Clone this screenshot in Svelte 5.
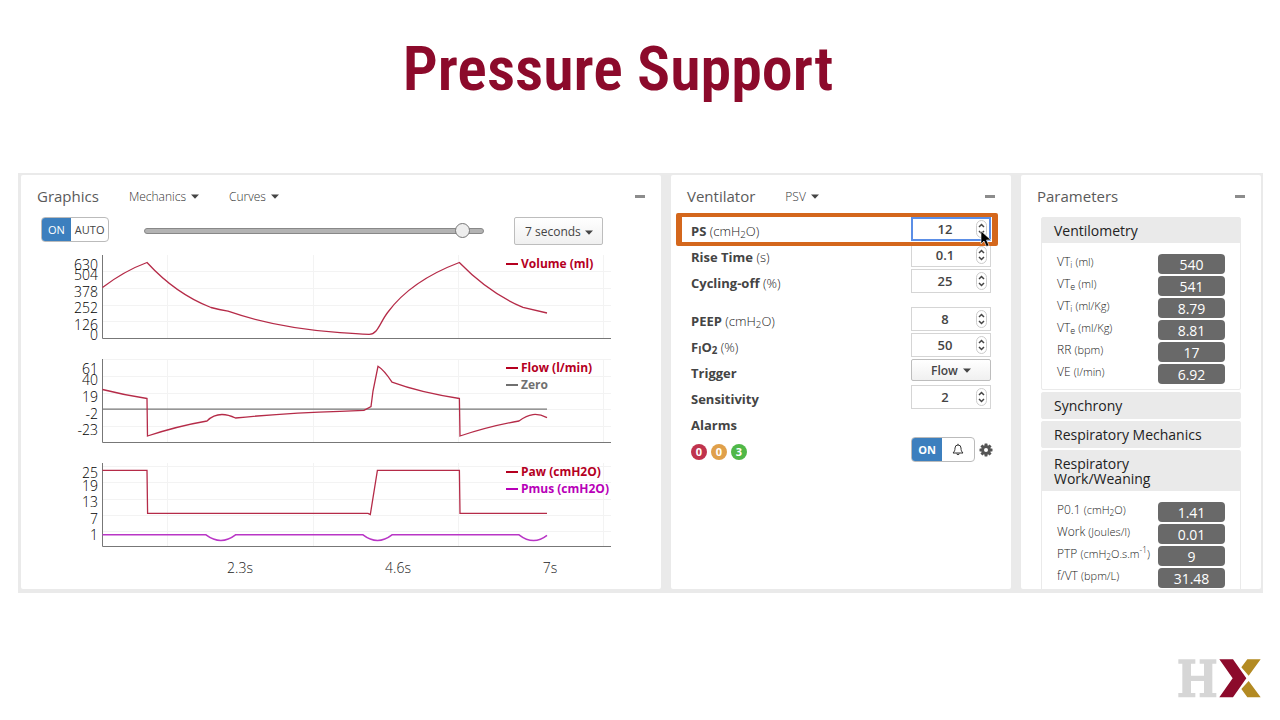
<script>
  const settings = [
    { id: 'ps', name: 'PS', unit: '(cmH<sub>2</sub>O)', value: 12, step: 1, active: true },
    { id: 'rise', name: 'Rise Time', unit: '(s)', value: 0.1, step: 0.1 },
    { id: 'cycling', name: 'Cycling-off', unit: '(%)', value: 25, step: 1 },
    { id: 'peep', name: 'PEEP', unit: '(cmH<sub>2</sub>O)', value: 8, step: 1, spaced: true },
    { id: 'fio2', name: 'F<sub>I</sub>O<sub>2</sub>', unit: '(%)', value: 50, step: 1 },
    { id: 'trigger', name: 'Trigger', options: ['Flow', 'Pressure'] },
    { id: 'sensitivity', name: 'Sensitivity', unit: '', value: 2, step: 1 },
  ];
  let values = $state(Object.fromEntries(settings.map((s) => [s.id, s.value])));
  let span = $state(96);

  function bump(s, dir) {
    values[s.id] = Math.round((Number(values[s.id]) + dir * s.step) * 10) / 10;
  }

  const groups = [
    {
      title: 'Ventilometry',
      rows: [
        ['VT<sub>i</sub>', '(ml)', '540'],
        ['VT<sub>e</sub>', '(ml)', '541'],
        ['VT<sub>i</sub>', '(ml/Kg)', '8.79'],
        ['VT<sub>e</sub>', '(ml/Kg)', '8.81'],
        ['RR', '(bpm)', '17'],
        ['VE', '(l/min)', '6.92'],
      ],
    },
    { title: 'Synchrony', rows: [] },
    { title: 'Respiratory Mechanics', rows: [] },
    {
      title: 'Respiratory Work/Weaning',
      rows: [
        ['P0.1', '(cmH<sub>2</sub>O)', '1.41'],
        ['Work', '(Joules/l)', '0.01'],
        ['PTP', '(cmH<sub>2</sub>O.s.m<sup>-1</sup>)', '9'],
        ['f/VT', '(bpm/L)', '31.48'],
      ],
    },
  ];

  const red = '#b5001f';
  const plots = [
    {
      top: 255,
      bottom: 339,
      grid: [271, 288, 305, 321],
      ticks: [['630', 270], ['504', 280], ['378', 297], ['252', 313], ['126', 330], ['0', 340]],
      legend: [['Volume (ml)', red, 268]],
    },
    {
      top: 359,
      bottom: 443,
      grid: [359, 376, 393, 409, 426],
      ticks: [['61', 374], ['40', 385], ['19', 402], ['-2', 419], ['-23', 435]],
      legend: [['Flow (l/min)', red, 372], ['Zero', '#707070', 389]],
    },
    {
      top: 463,
      bottom: 547,
      grid: [466, 482, 499, 515, 531],
      ticks: [['25', 478], ['19', 491], ['13', 507], ['7', 524], ['1', 540]],
      legend: [['Paw (cmH2O)', red, 476], ['Pmus (cmH2O)', '#b800b8', 493]],
    },
  ];
  const columns = [167, 313, 458, 603];
</script>

{#snippet caret()}
  <svg class="caret" viewBox="0 0 8 5" aria-hidden="true"><path d="M0 0.4h8L4 4.8z" /></svg>
{/snippet}

<main>
  <h1>Pressure Support</h1>

  <div class="board">
    <section class="panel graphics">
      <header>
        <h2>Graphics</h2>
        <button class="menu first">Mechanics {@render caret()}</button>
        <button class="menu second">Curves {@render caret()}</button>
        <button class="collapse" aria-label="Collapse graphics"></button>
      </header>
      <div class="controls">
        <div class="toggle" role="group" aria-label="Scaling">
          <button class="on" aria-pressed="true">ON</button>
          <button aria-pressed="false">AUTO</button>
        </div>
        <input class="range" type="range" min="0" max="100" bind:value={span} aria-label="Time position" />
        <div class="select wide">
          <select aria-label="Time window">
            <option>7 seconds</option>
            <option>14 seconds</option>
          </select>
          {@render caret()}
        </div>
      </div>
      <svg class="chart" viewBox="37 250 608 332" role="img" aria-label="Volume, flow and pressure curves">
        {#each plots as p}
          {#each p.grid as y}<path class="grid" d="M103 {y}.5H611" />{/each}
          {#each columns as x}<path class="grid" d="M{x}.5 {p.top}V{p.bottom}" />{/each}
          <path class="axis" d="M102.5 {p.top}V{p.bottom - 0.5}H611" />
          {#each p.ticks as [t, y]}<text class="tick" x="98" {y}>{t}</text>{/each}
        {/each}

        <path class="curve" d="M102.5 287.5Q124 271 147 262.5Q176 294 211 307.5Q219 309.5 228 311.2C262 323 296 329.5 340 332.6Q357 333.8 369 334.3C378 334.5 380 322 388 312C405 289 429 274 459.3 262.5Q489 293 523 307.4Q534 310 547 313" />
        <path class="zero" d="M103 409.2H547" />
        <path class="curve" d="M102.5 389.5Q124 395 147 398.5L147.5 436Q178 426 207 421C215 413 225 413 235.5 418Q290 412.5 340 411.3L364 410.3L371 406.5L373 391L378 366.3Q384 370 392 382.2Q420 392.5 459.4 398.5L460 436Q490 426 519 421C529 413.5 537 412.5 547 417.7" />
        <path class="curve" d="M102.5 470.4H147L147.6 513.4H368L370.3 514.6L377.4 470.4H459.4L460 513.4H547" />
        <path class="pmus" d="M102.5 534.8H206Q221 546 235.5 534.8H363Q377.500 546 392 534.8H519Q533.500 546 547 535.4" />

        {#each plots as p}
          {#each p.legend as [name, color, y]}
            <path d="M506 {y - 4}h12" stroke={color} stroke-width="2" />
            <text class="legend" x="521" {y} fill={color}>{name}</text>
          {/each}
        {/each}
        <text class="time" x="240" y="573">2.3s</text>
        <text class="time" x="398" y="573">4.6s</text>
        <text class="time" x="550" y="573">7s</text>
      </svg>
    </section>

    <section class="panel ventilator">
      <header>
        <h2>Ventilator</h2>
        <button class="menu first">PSV {@render caret()}</button>
        <button class="collapse" aria-label="Collapse ventilator"></button>
      </header>
      {#each settings as s}
        <div class="setting" class:active={s.active} class:spaced={s.spaced}>
          <label for={s.id}><b>{@html s.name}</b> {#if s.unit}<span>{@html s.unit}</span>{/if}</label>
          {#if s.options}
            <div class="select narrow">
              <select id={s.id}>
                {#each s.options as o}<option>{o}</option>{/each}
              </select>
              {@render caret()}
            </div>
          {:else}
            <div class="number">
              <input id={s.id} type="number" step={s.step} bind:value={values[s.id]} />
              <div class="stepper">
                <button aria-label="Increase" onclick={() => bump(s, 1)}>
                  <svg viewBox="0 0 7 5" aria-hidden="true"><path d="M1 4l2.500-2.500L6 4" /></svg>
                </button>
                <button aria-label="Decrease" onclick={() => bump(s, -1)}>
                  <svg viewBox="0 0 7 5" aria-hidden="true"><path d="M1 1l2.500 2.500L6 1" /></svg>
                </button>
              </div>
            </div>
          {/if}
          {#if s.active}
            <svg class="pointer" viewBox="0 0 12 18" aria-hidden="true">
              <path d="M1 1v13l3-3 2.500 5.500 2.500-1-2.500-5.500H11z" />
            </svg>
          {/if}
        </div>
      {/each}
      <h3>Alarms</h3>
      <div class="alarms">
        <span class="badge high">0</span>
        <span class="badge medium">0</span>
        <span class="badge low">3</span>
        <div class="toggle bold" role="group" aria-label="Alarms">
          <button class="on" aria-pressed="true">ON</button>
          <button aria-pressed="false" aria-label="Silence">
            <svg class="bell" viewBox="0 0 12 13" aria-hidden="true">
              <path d="M1 10c1.500-1.500 2-2.700 2-5a3 3 0 0 1 6 0c0 2.300.5 3.500 2 5z" />
              <path d="M6 2V.8M4.800 10.500a1.200 1.200 0 0 0 2.400 0" />
            </svg>
          </button>
        </div>
        <button class="gear" aria-label="Alarm settings">
          <svg viewBox="-7 -7 14 14" aria-hidden="true">
            {#each [0, 45, 90, 135] as a}
              <rect x="-1.500" y="-6.500" width="3" height="13" rx="0.4" transform="rotate({a})" />
            {/each}
            <circle r="4.800" />
            <circle class="hole" r="2" />
          </svg>
        </button>
      </div>
    </section>

    <section class="panel parameters">
      <header>
        <h2>Parameters</h2>
        <button class="collapse" aria-label="Collapse parameters"></button>
      </header>
      <div class="groups">
        {#each groups as g}
          <article>
            <h3>{g.title}</h3>
            {#if g.rows.length}
              <table>
                <tbody>
                  {#each g.rows as [name, unit, value]}
                    <tr>
                      <th scope="row">{@html name} <small>{@html unit}</small></th>
                      <td><span>{value}</span></td>
                    </tr>
                  {/each}
                </tbody>
              </table>
            {/if}
          </article>
        {/each}
      </div>
    </section>
  </div>

  <footer>
    <svg class="logo" viewBox="39 41 249 117" role="img" aria-label="HX">
      <path fill="#d6d6d6" d="M40 42h51v13H78v36h39V55h-13V42h50v13h-12v88h12v13h-50v-13h13v-36H78v36h13v13H40v-13h12V55H40z" />
      <path fill="#8c0a2b" d="M163 42h41l40 57-40 57h-41l40-57z" />
      <path fill="#b38a22" d="M247 42h40l-36 49-22-25zM251 107l36 49h-40l-18-25z" />
    </svg>
  </footer>
</main>

<style>
  :global(body) {
    margin: 0;
    background: #fff;
  }
  main {
    font-family: 'Open Sans', 'Noto Sans', sans-serif;
    color: #444;
  }
  main :global(sub),
  main :global(sup) {
    font-size: 75%;
    line-height: 0;
  }
  main :global(sub) {
    vertical-align: -2px;
  }
  h1,
  h2,
  h3 {
    margin: 0;
    font-weight: 400;
  }
  h1 {
    height: 173px;
    box-sizing: border-box;
    padding: 31px 44px 0 0;
    text-align: center;
    font: 600 62px/76px 'Avenir Next Condensed', 'Roboto Condensed', 'Liberation Sans Narrow', 'DejaVu Sans Condensed', sans-serif;
    color: #8c0a2b;
  }
  button,
  select,
  input {
    font: inherit;
    color: inherit;
  }
  button {
    padding: 0;
    border: 0;
    background: none;
  }

  .board {
    display: grid;
    grid-template-columns: 640fr 340fr 240fr;
    gap: 10px;
    margin: 0 17px 0 18px;
    padding: 2px 2px 4px 3px;
    background: #eaeaea;
  }
  .panel {
    min-width: 0;
    box-sizing: border-box;
    padding: 0 20px 0 16px;
    background: #fff;
    border-radius: 2px;
  }
  .panel > header {
    display: flex;
    align-items: center;
    height: 42px;
    margin-right: -4px;
  }
  .panel.graphics > header {
    margin-right: 0;
  }
  h2 {
    font-size: 15px;
    color: #5a5a5a;
  }
  .menu {
    display: flex;
    align-items: center;
    gap: 5px;
    margin-left: 30px;
    font-size: 12px;
    font-weight: 300;
    color: #333;
  }
  .caret {
    width: 8px;
    height: 5px;
    fill: #444;
  }
  .collapse {
    width: 10px;
    height: 3px;
    margin-left: auto;
    background: #8c8c8c;
  }

  .graphics {
    padding-right: 16px;
  }
  .controls {
    display: flex;
    align-items: flex-start;
    height: 33px;
    padding: 0 42px 0 4px;
  }
  .toggle {
    display: flex;
    box-sizing: border-box;
    height: 25px;
    border: 1px solid #bbb;
    border-radius: 4px;
    overflow: hidden;
    font-size: 11px;
  }
  .toggle button {
    padding: 0 4px;
  }
  .toggle .on {
    padding: 0 6px;
    background: #3c7fbe;
    color: #fff;
  }
  .range {
    appearance: none;
    flex: 1;
    min-width: 0;
    height: 28px;
    margin: 0 30px 0 35px;
    background: none;
  }
  .range::-webkit-slider-runnable-track {
    height: 6px;
    box-sizing: border-box;
    border: 1px solid #888;
    border-radius: 3px;
    background: #b3b3b3;
  }
  .range::-webkit-slider-thumb {
    appearance: none;
    box-sizing: border-box;
    width: 15px;
    height: 15px;
    margin-top: -6px;
    border: 1px solid #777;
    border-radius: 50%;
    background: #eee;
  }
  .select {
    position: relative;
  }
  .select select {
    appearance: none;
    box-sizing: border-box;
    width: 100%;
    height: 100%;
    border: 1px solid #bdbdbd;
    border-radius: 2px;
    background: linear-gradient(#fff, #f0f0f0);
  }
  .select .caret {
    position: absolute;
    pointer-events: none;
  }
  .wide {
    width: 89px;
    height: 28px;
    font-size: 12px;
  }
  .wide select {
    padding: 0 10px;
  }
  .wide .caret {
    right: 10px;
    top: 13px;
  }
  .chart {
    display: block;
    width: 100%;
    height: auto;
    padding-bottom: 7px;
    fill: none;
  }
  .grid {
    stroke: #f3f3f3;
  }
  .axis {
    stroke: #777;
  }
  .curve {
    stroke: #b52b48;
    stroke-width: 1.3;
  }
  .zero {
    stroke: #777;
    stroke-width: 1.3;
  }
  .pmus {
    stroke: #b936c6;
    stroke-width: 1.500;
  }
  .tick {
    font-size: 14px;
    font-weight: 300;
    text-anchor: end;
    fill: #000;
  }
  .time {
    font-size: 14px;
    font-weight: 300;
    text-anchor: middle;
    fill: #222;
  }
  .legend {
    font-size: 12px;
    font-weight: 700;
  }

  .setting {
    position: relative;
    display: flex;
    justify-content: space-between;
    height: 26px;
    padding-left: 4px;
  }
  .setting.spaced {
    margin-top: 12px;
  }
  .setting label,
  .ventilator h3 {
    font-size: 13px;
    line-height: 28px;
  }
  .setting b,
  .ventilator h3 {
    font-weight: 700;
    color: #444;
  }
  .setting span {
    font-weight: 300;
    color: #222;
  }
  .ventilator h3 {
    padding-left: 4px;
    height: 26px;
  }
  .number {
    position: relative;
    width: 80px;
    height: 24px;
  }
  .number input {
    appearance: textfield;
    box-sizing: border-box;
    width: 100%;
    height: 100%;
    margin: 0;
    padding: 0 12px 0 0;
    border: 1px solid #d5d5d5;
    background: #fff;
    text-align: center;
    font-size: 13px;
    font-weight: 600;
    outline: none;
  }
  .number input::-webkit-inner-spin-button {
    display: none;
  }
  .stepper {
    position: absolute;
    right: 4px;
    top: 3px;
    display: flex;
    flex-direction: column;
    justify-content: space-evenly;
    align-items: center;
    box-sizing: border-box;
    width: 11px;
    height: 18px;
    border: 1px solid #ccc;
    border-radius: 6px;
    background: #fff;
  }
  .stepper button {
    display: flex;
  }
  .stepper svg {
    width: 7px;
    height: 5px;
    fill: none;
    stroke: #444;
    stroke-width: 1.500;
  }
  .active {
    z-index: 1;
  }
  .active::before {
    content: '';
    position: absolute;
    inset: -4px -7px -3px -11px;
    border: solid #d4671c;
    border-width: 4px 6px;
    border-radius: 2px;
    background: #fff;
  }
  .active label {
    position: relative;
  }
  .active input {
    border: 2px solid #5b8ee6;
  }
  .pointer {
    position: absolute;
    right: -1px;
    top: 13px;
    width: 12px;
    height: 18px;
    fill: #000;
    stroke: #fff;
    stroke-width: 0.6;
  }
  .narrow {
    width: 80px;
    height: 22px;
    font-size: 12px;
    font-weight: 600;
  }
  .narrow select {
    padding: 0 0 0 19px;
    font-weight: 600;
  }
  .narrow .caret {
    right: 20px;
    top: 9px;
  }
  .alarms {
    display: flex;
    align-items: center;
    gap: 4px;
    margin-right: -2px;
    padding-left: 4px;
  }
  .badge {
    width: 16px;
    margin-top: 4px;
    border-radius: 50%;
    text-align: center;
    font-size: 11px;
    font-weight: 700;
    line-height: 16px;
    color: #fff;
  }
  .high {
    background: #c0334d;
  }
  .medium {
    background: #e0a04a;
  }
  .low {
    background: #50b848;
  }
  .bold {
    margin-left: auto;
    font-weight: 700;
  }
  .bold button {
    padding: 0 10px;
  }
  .bell {
    display: block;
    width: 12px;
    height: 13px;
    fill: none;
    stroke: #333;
  }
  .gear svg {
    display: block;
    width: 14px;
    height: 14px;
    fill: #555;
  }
  .gear .hole {
    fill: #fff;
  }

  .parameters {
    contain: size;
    overflow: hidden;
  }
  .groups {
    display: flex;
    flex-direction: column;
    gap: 2px;
    padding-left: 4px;
  }
  .groups article {
    border: 1px solid #eaeaea;
    border-radius: 2px;
  }
  .groups h3 {
    padding: 5px 12px;
    background: #eaeaea;
    font-size: 14px;
    line-height: 15px;
    color: #222;
  }
  table {
    width: 100%;
    padding: 10px 15px 4px;
    border-spacing: 0;
  }
  th,
  td {
    height: 22px;
    padding: 0;
  }
  th {
    text-align: left;
    font-size: 12px;
    font-weight: 300;
    line-height: 18px;
    vertical-align: top;
    white-space: nowrap;
    color: #222;
  }
  th small {
    font-size: 11px;
  }
  td {
    width: 67px;
  }
  td span {
    display: block;
    height: 20px;
    border-radius: 4px;
    background: #696969;
    text-align: center;
    font-size: 14px;
    line-height: 21px;
    color: #fff;
  }

  footer {
    display: flex;
    justify-content: flex-end;
    padding: 66px 19px 20px;
  }
  .logo {
    width: 83px;
    height: 39px;
  }
</style>
